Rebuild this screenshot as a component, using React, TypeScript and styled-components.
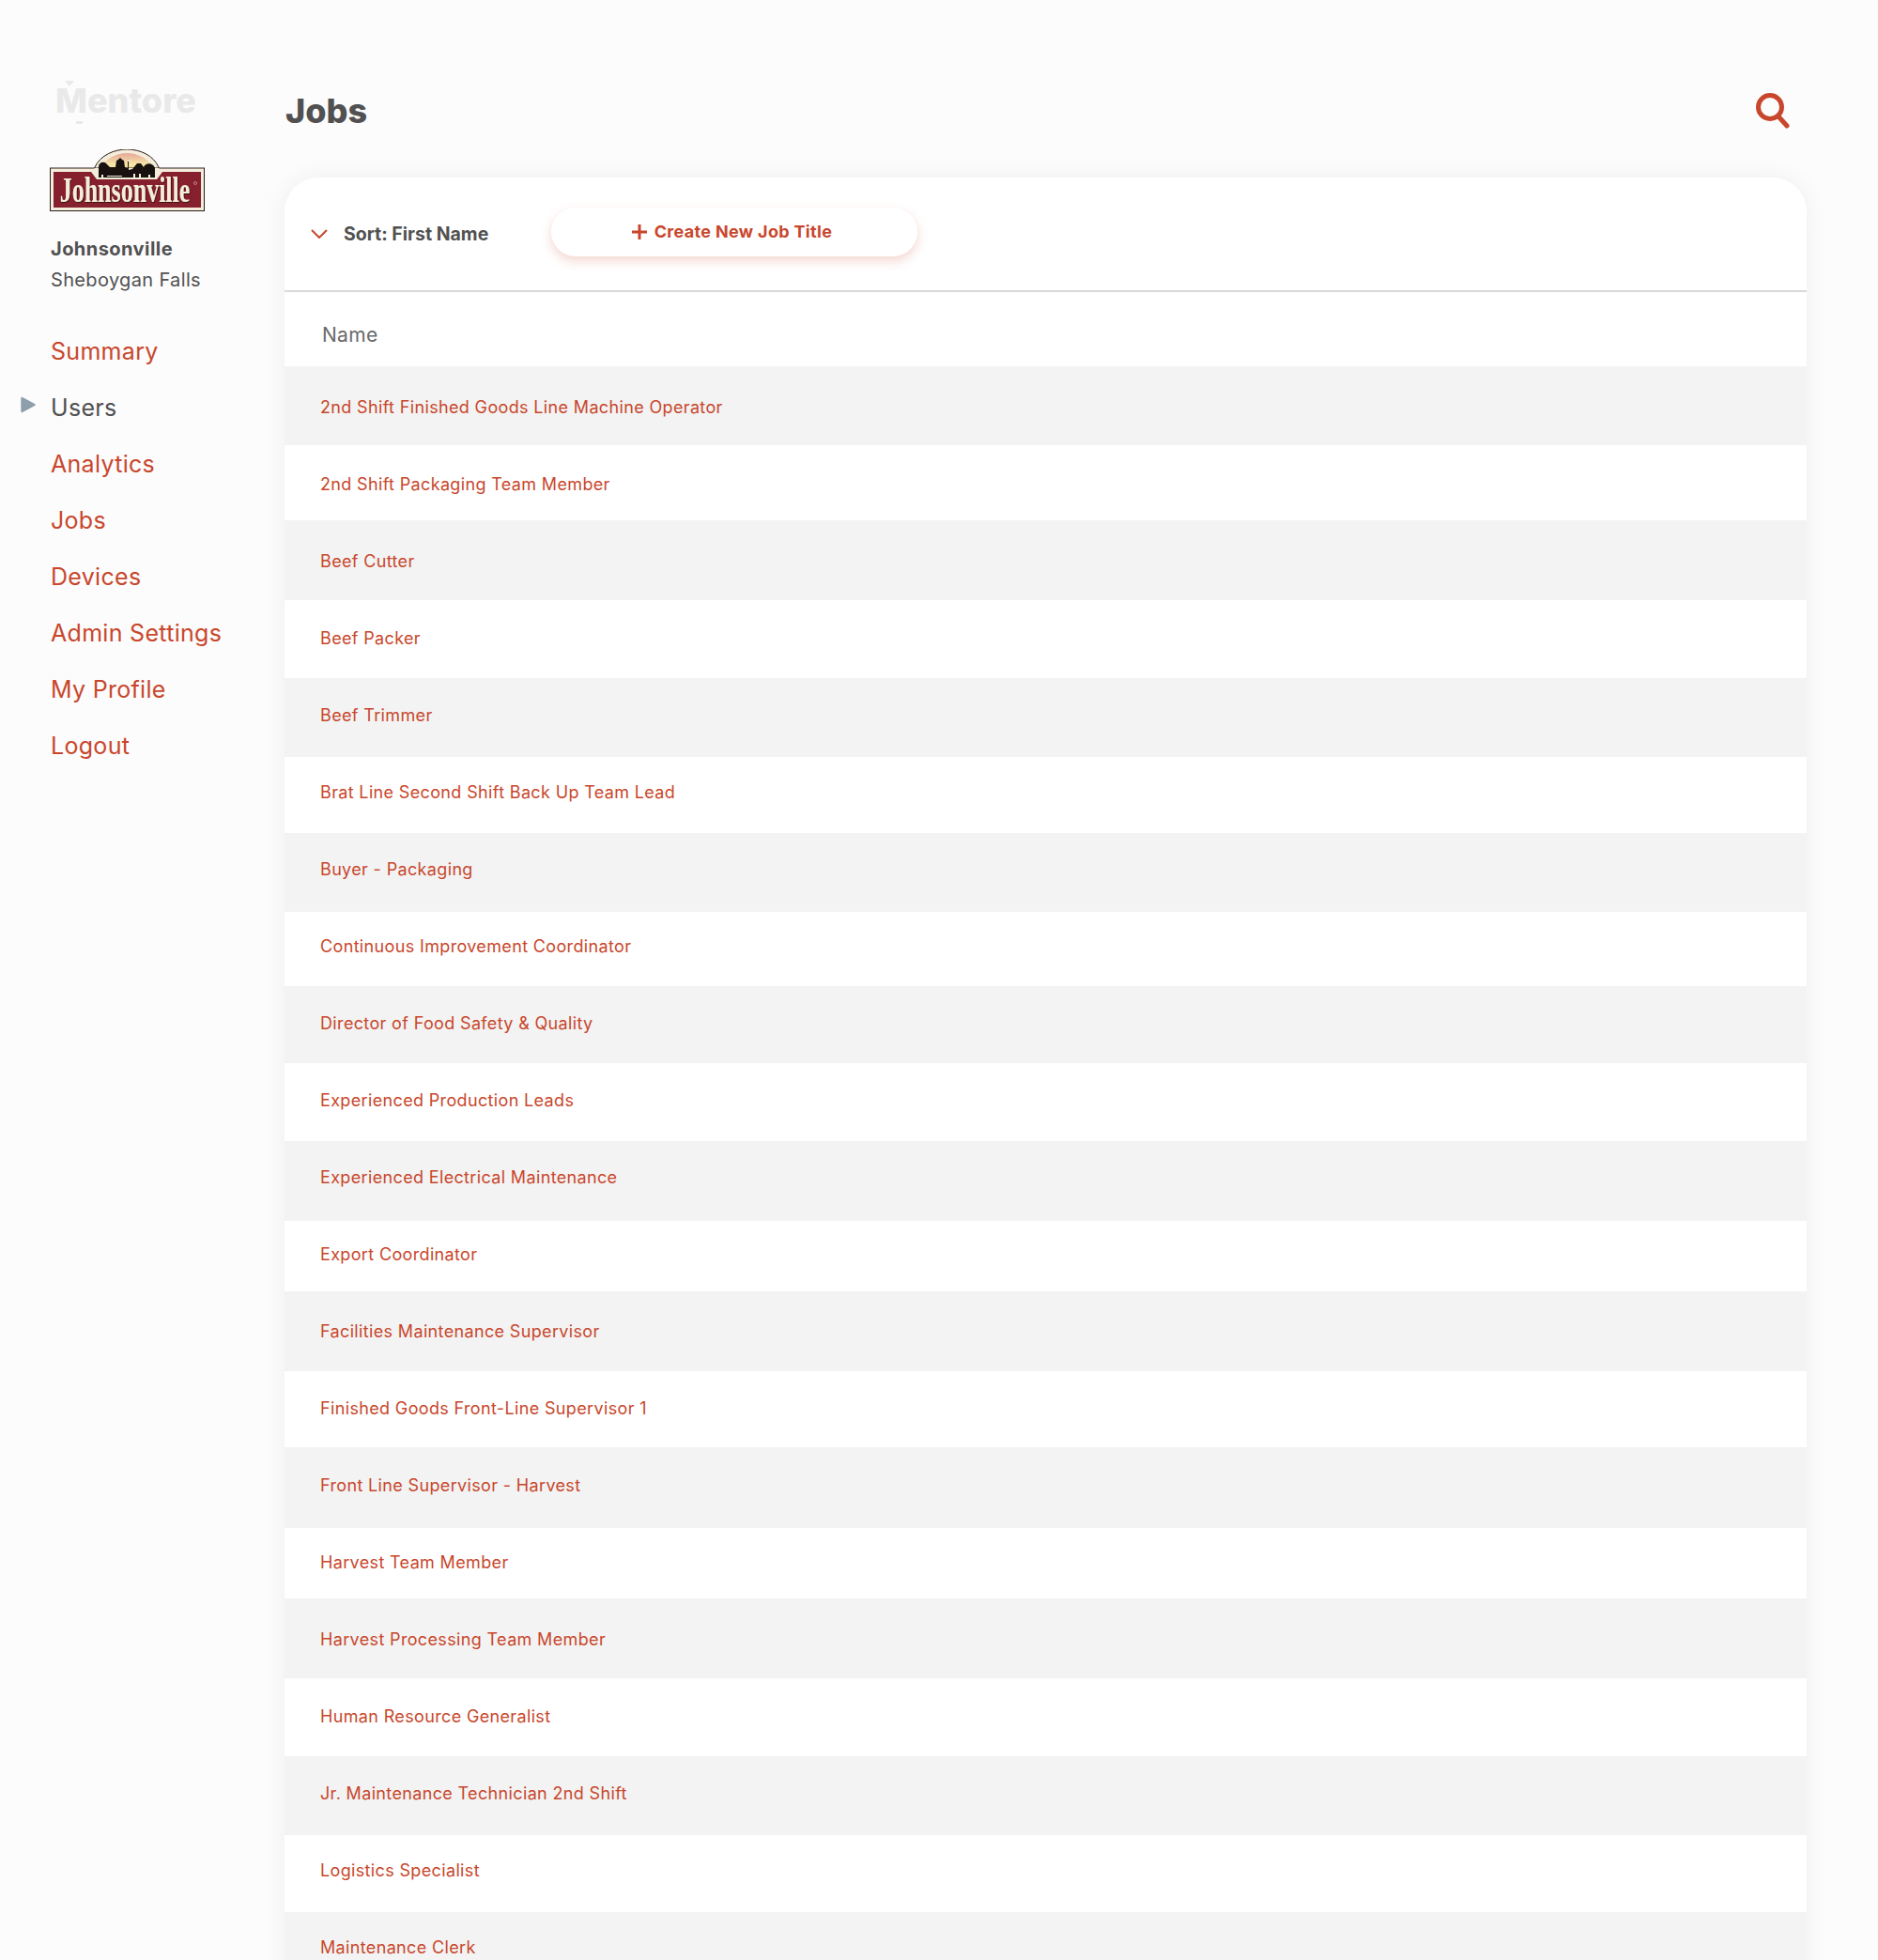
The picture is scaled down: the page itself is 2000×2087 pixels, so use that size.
import React from "react";
import styled, { createGlobalStyle } from "styled-components";

const RED = "#c8472c";
const INK = "#515151";

const GlobalStyle = createGlobalStyle`
  html, body {
    margin: 0;
    padding: 0;
    background: #fcfcfc;
  }
  body {
    font-family: "Inter", "Liberation Sans", sans-serif;
  }
`;

const Page = styled.div`
  display: flex;
  width: 2000px;
  height: 2087px;
  overflow: hidden;
  background: #fcfcfc;
`;

const Sidebar = styled.aside`
  width: 303px;
  flex: none;
  padding: 87px 0 0 54px;
  box-sizing: border-box;
`;

const Brand = styled.div`
  font-size: 36px;
  line-height: 40px;
  font-weight: 800;
  color: #e9e9e9;
  margin-left: 5px;
`;

const BrandM = styled.span`
  position: relative;
  &::before {
    content: "";
    position: absolute;
    left: 10px;
    top: 1px;
    border-left: 5px solid transparent;
    border-right: 5px solid transparent;
    border-top: 6px solid #e9e9e9;
  }
  &::after {
    content: "";
    position: absolute;
    left: 22px;
    bottom: -3px;
    width: 7px;
    height: 3px;
    background: #e9e9e9;
  }
`;

const LogoWrap = styled.div`
  margin: 32px 0 0 -1px;
  width: 165px;
  height: 66px;
`;

const CompanyName = styled.div`
  margin-top: 27px;
  font-size: 20px;
  line-height: 26px;
  font-weight: 700;
  letter-spacing: 0.45px;
  color: ${INK};
`;

const CompanySite = styled.div`
  margin-top: 7px;
  font-size: 20px;
  line-height: 26px;
  letter-spacing: 0.35px;
  color: ${INK};
`;

const Nav = styled.nav`
  margin-top: 33px;
  display: flex;
  flex-direction: column;
`;

const NavItem = styled.a<{ $active?: boolean }>`
  position: relative;
  height: 60px;
  display: flex;
  align-items: center;
  font-size: 25px;
  letter-spacing: 0.3px;
  color: ${({ $active }) => ($active ? INK : RED)};
`;

const NavMarker = styled.svg`
  position: absolute;
  left: -32px;
  top: 18px;
  width: 16px;
  height: 18px;
`;

const Main = styled.main`
  width: 1621px;
  flex: none;
`;

const Header = styled.header`
  height: 189px;
  display: flex;
  justify-content: space-between;
  padding-top: 96px;
  box-sizing: border-box;
`;

const Title = styled.h1`
  margin: 0 0 0 1px;
  font-size: 36px;
  line-height: 44px;
  font-weight: 800;
  color: ${INK};
`;

const SearchIcon = styled.svg`
  width: 36px;
  height: 38px;
  margin: 3px 18px 0 0;
`;

const Card = styled.section`
  background: #fff;
  border-radius: 36px 36px 0 0;
  box-shadow: 0 0 26px rgba(0, 0, 0, 0.06);
`;

const Toolbar = styled.div`
  height: 122px;
  display: flex;
  align-items: center;
  padding: 0 0 2px 28px;
  box-sizing: border-box;
  border-bottom: 2px solid #d9d9d9;
`;

const Sort = styled.div`
  width: 257px;
  display: flex;
  align-items: center;
  gap: 17px;
  padding-top: 1px;
  font-size: 19.5px;
  font-weight: 700;
  color: ${INK};
`;

const CreateButton = styled.button`
  width: 390px;
  height: 52px;
  margin: -3px 0 0 -1px;
  padding: 0 5px 0 0;
  display: flex;
  align-items: center;
  justify-content: center;
  gap: 8px;
  border: 0;
  border-radius: 26px;
  background: #fff;
  font-family: inherit;
  font-size: 18px;
  font-weight: 700;
  letter-spacing: 0.33px;
  color: ${RED};
  box-shadow: 0 5px 12px rgba(200, 71, 44, 0.22);
`;

const ColumnHeader = styled.div`
  height: 79px;
  padding: 11px 0 0 40px;
  box-sizing: border-box;
  display: flex;
  align-items: center;
  font-size: 21px;
  letter-spacing: 0.3px;
  color: #6a6a6a;
`;

const Row = styled.div<{ $odd: boolean; $height: number; $offset: number }>`
  height: ${({ $height }) => $height}px;
  padding: ${({ $offset }) => $offset}px 0 0 38px;
  box-sizing: border-box;
  font-size: 18px;
  line-height: 24px;
  letter-spacing: 0.35px;
  color: ${RED};
  background: ${({ $odd }) => ($odd ? "#f3f3f3" : "#fff")};
`;

const NAV_ITEMS = [
  "Summary",
  "Users",
  "Analytics",
  "Jobs",
  "Devices",
  "Admin Settings",
  "My Profile",
  "Logout",
];

const JOBS = [
  "2nd Shift Finished Goods Line Machine Operator",
  "2nd Shift Packaging Team Member",
  "Beef Cutter",
  "Beef Packer",
  "Beef Trimmer",
  "Brat Line Second Shift Back Up Team Lead",
  "Buyer - Packaging",
  "Continuous Improvement Coordinator",
  "Director of Food Safety & Quality",
  "Experienced Production Leads",
  "Experienced Electrical Maintenance",
  "Export Coordinator",
  "Facilities Maintenance Supervisor",
  "Finished Goods Front-Line Supervisor 1",
  "Front Line Supervisor - Harvest",
  "Harvest Team Member",
  "Harvest Processing Team Member",
  "Human Resource Generalist",
  "Jr. Maintenance Technician 2nd Shift",
  "Logistics Specialist",
  "Maintenance Clerk",
];

// the stripes are not even in the design, but the text keeps an 82px pitch
const BANDS = [
  390, 474, 554, 639, 722, 806, 887, 971, 1050, 1132, 1215, 1300, 1375, 1460,
  1541, 1627, 1702, 1787, 1870, 1954, 2036, 2120,
];

const Logo = () => (
  <svg width="165" height="66" viewBox="0 0 165 66">
    <defs>
      <linearGradient id="sky" x1="0" y1="0" x2="0" y2="1">
        <stop offset="0" stopColor="#e6a79a" />
        <stop offset="0.6" stopColor="#f6e6a6" />
      </linearGradient>
      <filter id="letterShade" x="-5%" y="-5%" width="110%" height="115%">
        <feDropShadow dx="0.6" dy="0.6" stdDeviation="0" floodColor="#2a0d10" />
      </filter>
    </defs>
    <path d="M48 26 V19 C54 6 69 0 82 0 C96 0 110 6 116 19 V26 Z" fill="#f5eddb" stroke="#2a1d18" strokeWidth="1" />
    <path d="M52 24 C57 10 71 4 82 4 C94 4 107 10 112 24 Z" fill="url(#sky)" />
    <rect x="0.5" y="20" width="164" height="45.5" fill="#f5eddb" stroke="#2a1d18" />
    <rect x="4" y="24" width="157" height="38" fill="#861f2e" />
    <path d="M44 24 L48 20 H116 L120 24 L114 32 H50 Z" fill="#f5eddb" />
    <path d="M52 19 C52 13 58 13 60 15 L64 19 H70 L71 12 L73 11 L75 9 L77 11 L79 12 L80 19 L83 20 V10 H84 V22 L88 21 L93 15 L97 15 L100 19 C102 14 110 14 112 20 V30 H52 Z" fill="#17120f" />
    <path d="M83 10 L86 12 L83 13 Z" fill="#f5eddb" />
    <path d="M55 30 h2 v-3 h-2 z M61 29 h16 v-1 h-16 z M89 30 h2 v-4 h-2 z M95 30 h2 v-4 h-2 z M105 30 h2 v-3 h-2 z" fill="#f5eddb" />
    <text
      transform="translate(80 56) scale(1 1.42)"
      textAnchor="middle"
      fontFamily="'Liberation Serif', serif"
      fontWeight="700"
      fontSize="26"
      fill="#f5eddb"
      filter="url(#letterShade)"
    >
      Johnsonville
    </text>
    <circle cx="155" cy="36" r="1.5" fill="none" stroke="#d9a9a9" strokeWidth="0.7" />
  </svg>
);

export default function App() {
  return (
    <Page>
      <GlobalStyle />
      <Sidebar>
        <Brand>
          <BrandM>M</BrandM>entore
        </Brand>
        <LogoWrap>
          <Logo />
        </LogoWrap>
        <CompanyName>Johnsonville</CompanyName>
        <CompanySite>Sheboygan Falls</CompanySite>
        <Nav>
          {NAV_ITEMS.map((item) => (
            <NavItem key={item} $active={item === "Users"}>
              {item === "Users" && (
                <NavMarker viewBox="0 0 16 18">
                  <path d="M1.5 2 L14.5 9 L1.5 16 Z" fill="#8e9eab" stroke="#8e9eab" strokeLinejoin="round" strokeWidth="2.4" />
                </NavMarker>
              )}
              {item}
            </NavItem>
          ))}
        </Nav>
      </Sidebar>
      <Main>
        <Header>
          <Title>Jobs</Title>
          <SearchIcon viewBox="0 0 36 38" fill="none" stroke={RED} strokeWidth="5" strokeLinecap="round">
            <circle cx="15" cy="15" r="12.5" />
            <path d="M24 25 L33 35" />
          </SearchIcon>
        </Header>
        <Card>
          <Toolbar>
            <Sort>
              <svg width="18" height="10" viewBox="0 0 18 10" fill="none" stroke={RED} strokeWidth="2">
                <path d="M1 1 L9 9 L17 1" />
              </svg>
              Sort: First Name
            </Sort>
            <CreateButton>
              <svg width="16" height="16" viewBox="0 0 16 16" stroke={RED} strokeWidth="3">
                <path d="M8 0 V16 M0 8 H16" />
              </svg>
              Create New Job Title
            </CreateButton>
          </Toolbar>
          <ColumnHeader>Name</ColumnHeader>
          {JOBS.map((job, i) => (
            <Row
              key={job}
              $odd={i % 2 === 0}
              $height={BANDS[i + 1] - BANDS[i]}
              $offset={421.5 + 82 * i - BANDS[i]}
            >
              {job}
            </Row>
          ))}
        </Card>
      </Main>
    </Page>
  );
}
